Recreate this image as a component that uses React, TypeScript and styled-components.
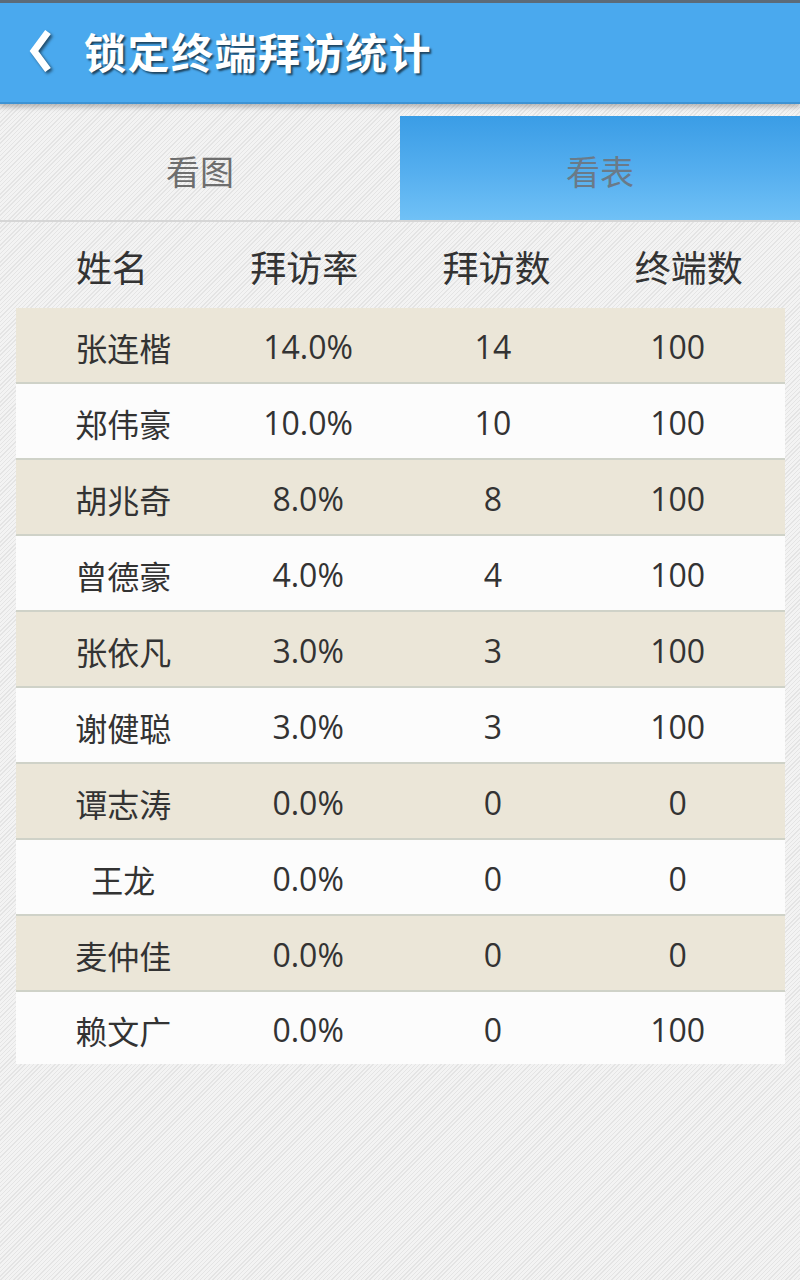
import React from "react";
import styled, { createGlobalStyle } from "styled-components";

const Global = createGlobalStyle`
  html, body { margin: 0; padding: 0; }
  body {
    width: 800px;
    min-height: 1280px;
    font-family: "Open Sans", "Noto Sans CJK SC", sans-serif;
    background-color: #efefef;
    background-image: repeating-linear-gradient(135deg, #f3f3f3 0px, #f3f3f3 2px, #e4e4e4 2px, #e4e4e4 3px);
  }
`;

const Page = styled.div`
  width: 800px;
  min-height: 1280px;
  display: flex;
  flex-direction: column;
`;

const TopBar = styled.header`
  background: #4aa9ee;
  border-top: 3px solid #5c6b78;
  border-bottom: 2px solid #3d93d4;
  box-shadow: 0 3px 5px rgba(0, 0, 0, 0.25);
  display: flex;
  align-items: center;
  padding-left: 26px;
  padding-bottom: 4px;
  gap: 28px;
  box-sizing: border-box;
  height: 104px;
`;

const Back = styled.svg`
  width: 30px;
  height: 46px;
  filter: drop-shadow(2px 2px 1.5px rgba(0, 0, 0, 0.55));
`;

const Title = styled.h1`
  margin: 0;
  color: #fff;
  font-family: "Noto Sans CJK SC", sans-serif;
  font-weight: 700;
  font-size: 42px;
  letter-spacing: 1.5px;
  text-shadow: 2px 2px 2px rgba(0, 0, 0, 0.6);
  line-height: 1;
`;

const Tabs = styled.nav`
  margin-top: 12px;
  height: 106px;
  display: grid;
  grid-template-columns: 1fr 1fr;
  border-bottom: 2px solid #d6d6d6;
  box-sizing: border-box;
`;

const Tab = styled.div<{ $active?: boolean }>`
  display: flex;
  align-items: center;
  justify-content: center;
  font-family: "Noto Sans CJK SC", sans-serif;
  font-size: 34px;
  color: ${(p) => (p.$active ? "#6a7a88" : "#6e6e6e")};
  background: ${(p) =>
    p.$active ? "linear-gradient(to bottom, #3a9de6 0%, #56afef 55%, #70c1f6 100%)" : "transparent"};
  padding-top: 4px;
`;

const Table = styled.section`
  margin: 0 15px 0 16px;
  display: flex;
  flex-direction: column;
`;

const HeadRow = styled.div`
  height: 86px;
  display: grid;
  grid-template-columns: repeat(4, 1fr);
  align-items: center;
`;

const HeadCell = styled.div`
  text-align: center;
  font-family: "Noto Sans CJK SC", sans-serif;
  font-size: 36px;
  color: #333;
  padding-top: 2px;
`;

const Row = styled.div<{ $odd: boolean; $last: boolean }>`
  box-sizing: border-box;
  display: grid;
  grid-template-columns: repeat(4, 1fr);
  align-items: center;
  padding: 0 15px;
  background: ${(p) => (p.$odd ? "#ebe6d8" : "#fcfcfc")};
  border-bottom: ${(p) => (p.$last ? "none" : "2px solid #cfd2c8")};
  height: ${(p) => (p.$last ? "72px" : "76px")};
`;

const Cell = styled.div`
  text-align: center;
  font-size: 32px;
  color: #333;
  padding-top: 3px;
`;

const data: [string, string, string, string][] = [
  ["张连楷", "14.0%", "14", "100"],
  ["郑伟豪", "10.0%", "10", "100"],
  ["胡兆奇", "8.0%", "8", "100"],
  ["曾德豪", "4.0%", "4", "100"],
  ["张依凡", "3.0%", "3", "100"],
  ["谢健聪", "3.0%", "3", "100"],
  ["谭志涛", "0.0%", "0", "0"],
  ["王龙", "0.0%", "0", "0"],
  ["麦仲佳", "0.0%", "0", "0"],
  ["赖文广", "0.0%", "0", "100"],
];

export default function App() {
  return (
    <>
      <Global />
      <Page>
        <TopBar>
          <Back viewBox="0 0 30 46">
            <path d="M22 4 L8 23 L22 42" fill="none" stroke="#fff" strokeWidth="7" strokeLinejoin="miter" />
          </Back>
          <Title>锁定终端拜访统计</Title>
        </TopBar>
        <Tabs>
          <Tab>看图</Tab>
          <Tab $active>看表</Tab>
        </Tabs>
        <Table>
          <HeadRow>
            <HeadCell>姓名</HeadCell>
            <HeadCell>拜访率</HeadCell>
            <HeadCell>拜访数</HeadCell>
            <HeadCell>终端数</HeadCell>
          </HeadRow>
          {data.map((r, i) => (
            <Row key={r[0]} $odd={i % 2 === 0} $last={i === data.length - 1}>
              {r.map((c, j) => (
                <Cell key={j}>{c}</Cell>
              ))}
            </Row>
          ))}
        </Table>
      </Page>
    </>
  );
}
